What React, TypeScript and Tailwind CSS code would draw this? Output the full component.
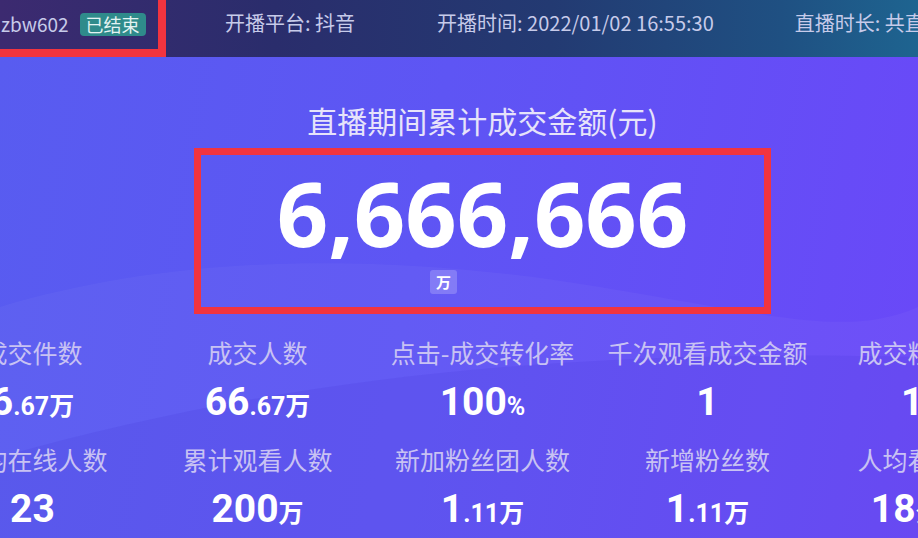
import React from 'react';

type Stat = { label: string; main: string; sub?: string };

const rows: Stat[][] = [
  [
    { label: '成交件数', main: '6', sub: '.67万' },
    { label: '成交人数', main: '66', sub: '.67万' },
    { label: '点击-成交转化率', main: '100', sub: '%' },
    { label: '千次观看成交金额', main: '1' },
    { label: '成交粉丝占比', main: '10', sub: '%' },
  ],
  [
    { label: '平均在线人数', main: '23' },
    { label: '累计观看人数', main: '200', sub: '万' },
    { label: '新加粉丝团人数', main: '1', sub: '.11万' },
    { label: '新增粉丝数', main: '1', sub: '.11万' },
    { label: '人均看播时长', main: '18', sub: '分30秒' },
  ],
];

const cjk = "font-['Noto_Sans_CJK_SC','Noto_Sans',sans-serif]";

function StatCell({ s }: { s: Stat }) {
  return (
    <div className="flex flex-col items-center">
      <div className={`${cjk} text-[25px] leading-[32px] text-[#c8c2f3] whitespace-nowrap`}>{s.label}</div>
      <div className="mt-[12px] h-[44px] flex items-baseline justify-center whitespace-nowrap text-white font-bold font-['Roboto','Noto_Sans_CJK_SC',sans-serif]">
        <span className="text-[39px] leading-[44px]">{s.main}</span>
        {s.sub && <span className="text-[25px] leading-[44px]">{s.sub}</span>}
      </div>
    </div>
  );
}

export default function App() {
  return (
    <div className={`w-[918px] h-[538px] overflow-hidden flex flex-col ${cjk}`}>
      {/* top info bar */}
      <header className="h-[57px] flex shrink-0 overflow-hidden whitespace-nowrap text-[20px] text-[#c7cbea] bg-[linear-gradient(90deg,#3c2a70_0%,#2a2d6c_30%,#233a72_60%,#1f5082_85%,#1e6490_100%)]">
        <div className="w-[166px] h-full shrink-0 flex items-center pl-[1px] border-r-[8px] border-b-[8px] border-[#f2343f] text-[19px]">
          <span>zbw602</span>
          <span className="ml-[11px] px-[6px] h-[23px] leading-[23px] rounded-[4px] bg-[#2f8b8b] text-[#e3f3f2] text-[18px]">已结束</span>
        </div>
        <div className="ml-[59px] h-[46px] flex items-center shrink-0">开播平台: 抖音</div>
        <div className="ml-[82px] h-[46px] flex items-center shrink-0">开播时间: 2022/01/02 16:55:30</div>
        <div className="ml-[81px] h-[46px] flex items-center shrink-0">直播时长: 共直播2小时30分钟</div>
      </header>

      {/* body */}
      <main className="relative flex-1 overflow-hidden bg-[linear-gradient(100deg,#585cf0_0%,#5e55f4_45%,#6a48f8_100%)]">
        <svg className="absolute inset-0 w-full h-full" viewBox="0 0 918 481" preserveAspectRatio="none">
          <path d="M0 250 C 200 190, 420 200, 600 230 S 850 280, 918 250 L 918 481 L 0 481 Z" fill="#ffffff" fillOpacity="0.035" />
          <path d="M0 400 C 250 330, 520 290, 918 300 L 918 481 L 0 481 Z" fill="#3c2bd0" fillOpacity="0.12" />
        </svg>
        <div className="relative ml-[-80px] w-[1125px] flex flex-col items-center">
          <h1 className="mt-[43px] text-[30px] leading-[40px] font-normal text-[#e6e3fa]">直播期间累计成交金额(元)</h1>
          <div className="mt-[8px] w-[577px] h-[166px] border-[7px] border-[#f2343f] flex flex-col items-center">
            <div className="mt-[13px] text-[90px] leading-[88px] font-bold text-white font-['Open_Sans',sans-serif]">6,666,666</div>
            <div className="mt-[14px] ml-[-78px] w-[27px] h-[24px] rounded-[3px] bg-white/20 flex items-center justify-center text-[15px] font-bold text-white">万</div>
          </div>
          <div className="mt-[22px] w-full grid grid-cols-5 gap-y-[19px]">
            {rows.flat().map((s, i) => (
              <StatCell key={i} s={s} />
            ))}
          </div>
        </div>
      </main>
    </div>
  );
}
